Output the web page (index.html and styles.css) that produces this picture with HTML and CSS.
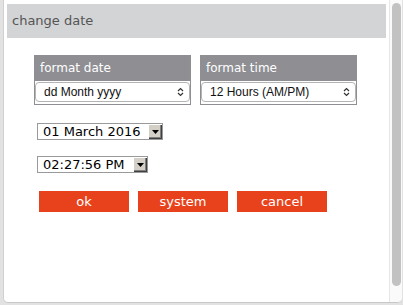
FILE: index.html
```html
<!DOCTYPE html>
<html lang="en">
<head>
    <meta charset="UTF-8">
    <title>change date</title>
    <link rel="stylesheet" href="styles.css">
</head>
<body>
    <div class="window">
        <div class="content">
            <div class="title">change date</div>

            <div class="formats">
                <div class="format">
                    <div class="format-head">format date</div>
                    <div class="format-body">
                        <div class="select">
                            <span>dd Month yyyy</span>
                            <svg class="updown" width="7" height="10" viewBox="0 0 7 10"><path d="M1 4 L3.5 1.5 L6 4 M1 6 L3.5 8.5 L6 6" fill="none" stroke="#333" stroke-width="1.2"/></svg>
                        </div>
                    </div>
                </div>
                <div class="format">
                    <div class="format-head">format time</div>
                    <div class="format-body">
                        <div class="select">
                            <span>12 Hours (AM/PM)</span>
                            <svg class="updown" width="7" height="10" viewBox="0 0 7 10"><path d="M1 4 L3.5 1.5 L6 4 M1 6 L3.5 8.5 L6 6" fill="none" stroke="#333" stroke-width="1.2"/></svg>
                        </div>
                    </div>
                </div>
            </div>

            <div class="picker picker-date">
                <span class="picker-text">01 March 2016</span>
                <span class="drop"><svg width="8" height="5" viewBox="0 0 8 5"><path d="M0 0 H7 L3.5 4 Z" fill="#000"/></svg></span>
            </div>

            <div class="picker picker-time">
                <span class="picker-text">02:27:56 PM</span>
                <span class="drop"><svg width="8" height="5" viewBox="0 0 8 5"><path d="M0 0 H7 L3.5 4 Z" fill="#000"/></svg></span>
            </div>

            <div class="actions">
                <button>ok</button>
                <button>system</button>
                <button>cancel</button>
            </div>
        </div>
        <div class="scrollbar"><div class="thumb"></div></div>
    </div>
</body>
</html>
```

FILE: styles.css
```css
body {
    margin: 0;
    background-color: #e2e2e2;
    font-family: "DejaVu Sans", Verdana, sans-serif;
}
.window {
    display: flex;
    margin-left: 3px;
    width: 399px;
    height: 303px;
    background: white;
    border-left: 1px solid #d0d0d0;
    border-bottom: 1px solid #c8c8c8;
    border-radius: 0 0 5px 5px;
    box-sizing: border-box;
    overflow: hidden;
}
.content {
    flex: 1;
    padding: 4px 3px 0 3px;
}
.title {
    height: 34px;
    line-height: 34px;
    background: #d3d4d6;
    color: #555;
    font-size: 13px;
    padding-left: 5px;
}
.formats {
    display: flex;
    gap: 9px;
    margin: 17px 0 0 27px;
}
.format {
    width: 157px;
    border: 1px solid #8e8e93;
    border-top: none;
    box-sizing: border-box;
}
.format-head {
    height: 26px;
    line-height: 26px;
    background: #8e8e93;
    color: white;
    font-size: 12px;
    padding-left: 5px;
}
.format-body {
    padding: 1px 0 2px 0;
}
.select {
    display: flex;
    align-items: center;
    justify-content: space-between;
    height: 18px;
    border: 1px solid #b4b4b4;
    border-radius: 4px;
    padding: 0 5px 0 8px;
    font-family: "Liberation Sans", Arial, sans-serif;
    font-size: 12px;
    color: #111;
}
.picker {
    display: flex;
    align-items: stretch;
    height: 17px;
    border: 1px solid #9a9a9a;
    box-sizing: border-box;
    margin-left: 30px;
    font-size: 13px;
    color: #000;
}
.picker-date {
    width: 126px;
    margin-top: 18px;
}
.picker-time {
    width: 111px;
    margin-top: 16px;
}
.picker-text {
    flex: 1;
    line-height: 15px;
    padding-left: 5px;
}
.drop {
    width: 14px;
    background: #d4d0c8;
    border-left: 1px solid #fff;
    border-top: 1px solid #fff;
    box-shadow: inset -1px -1px 0 #404040, inset -2px -2px 0 #808080;
    display: flex;
    align-items: center;
    justify-content: center;
    box-sizing: border-box;
}
.actions {
    display: flex;
    gap: 9px;
    margin: 18px 0 0 32px;
}
button {
    width: 90px;
    height: 21px;
    border: none;
    background: #e8421d;
    color: white;
    font-family: "DejaVu Sans", Verdana, sans-serif;
    font-size: 13px;
    padding: 0;
}
.scrollbar {
    width: 13px;
    border-left: 1px solid #e6e6e6;
    background: #fafafa;
    padding: 3px 1px 0 2px;
    box-sizing: border-box;
}
.thumb {
    height: 283px;
    background: #c2c2c2;
    border-radius: 5px;
}
```
